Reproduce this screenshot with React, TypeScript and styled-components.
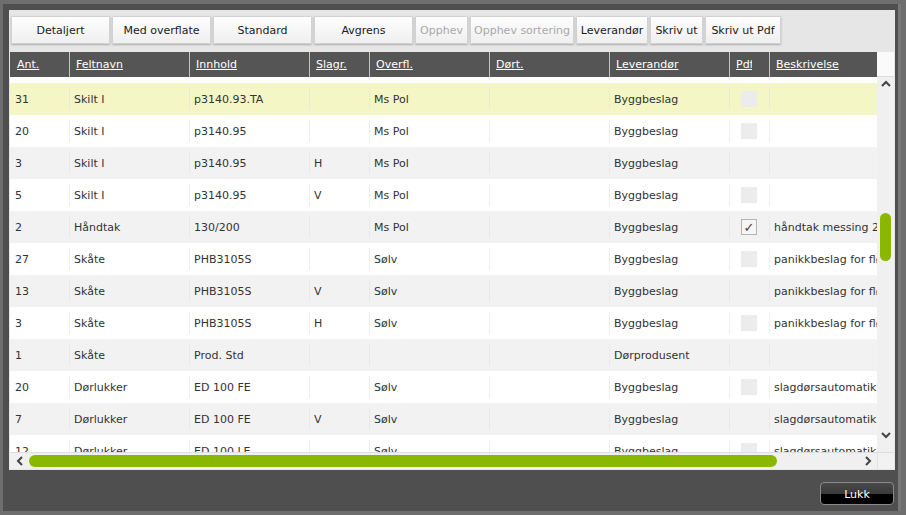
import { createGlobalStyle, styled } from "styled-components";

const GlobalStyle = createGlobalStyle`
  html, body {
    margin: 0;
    padding: 0;
    background: #6e6e6e;
    overflow: hidden;
  }
  body {
    font-family: "DejaVu Sans", Verdana, sans-serif;
    font-size: 11px;
    color: #333;
  }
`;

const Dialog = styled.div`
  margin: 4px 0 0 3px;
  width: 886px;
  height: 501px;
  padding: 6px 3px 0 6px;
  background: #4f4f4f;
  box-shadow: 3px 0 0 #787878, 0 3px 0 #787878;
  display: flex;
  flex-direction: column;
`;

const Panel = styled.div`
  width: 886px;
  height: 460px;
  background: #e6e6e6;
  display: flex;
  flex-direction: column;
`;

const Toolbar = styled.div`
  display: flex;
  gap: 2px;
  padding: 6px 0 0 2px;
  height: 28px;
  margin-bottom: 8px;
`;

const ToolButton = styled.button<{ $w: number }>`
  width: ${(p) => p.$w}px;
  height: 28px;
  padding: 0;
  font-family: inherit;
  font-size: 11px;
  color: ${(p) => (p.disabled ? "#a8a8a8" : "#1a1a1a")};
  background: linear-gradient(#fefefe, #efefef);
  border: 1px solid #d2d2d2;
  border-radius: 1px;
  box-shadow: 0 1px 2px rgba(0, 0, 0, 0.25);
  white-space: nowrap;
`;

const Table = styled.div`
  margin-left: 1px;
  width: 884px;
  height: 417px;
  background: #fff;
  display: grid;
  grid-template-columns: 867px 17px;
  grid-template-rows: 25px 375px 17px;
`;

const Header = styled.div`
  display: flex;
  background: #555;
  overflow: hidden;
`;

const HeadCell = styled.div<{ $w: number; $first?: boolean }>`
  flex: 0 0 ${(p) => p.$w}px;
  box-sizing: border-box;
  border-left: 1px solid ${(p) => (p.$first ? "transparent" : "#c4c4c4")};
  padding-left: 6px;
  display: flex;
  align-items: center;
  color: #fff;
  text-decoration: underline;
  overflow: hidden;
  white-space: nowrap;
`;

const Clip = styled.span<{ $max: number }>`
  display: inline-block;
  max-width: ${(p) => p.$max}px;
  overflow: hidden;
`;

const HeadCorner = styled.div`
  background: #fafafa;
  border-bottom: 1px solid #dcdcdc;
`;

const Body = styled.div`
  overflow: hidden;
  padding-top: 6px;
`;

const Row = styled.div<{ $tone: "sel" | "white" | "grey" }>`
  display: flex;
  height: 32px;
  background: ${(p) =>
    p.$tone === "sel" ? "#f4f6c6" : p.$tone === "grey" ? "#f2f2f2" : "#fff"};
`;

const Cell = styled.div<{ $w: number; $first?: boolean; $center?: boolean }>`
  flex: 0 0 ${(p) => p.$w}px;
  box-sizing: border-box;
  position: relative;
  padding-left: ${(p) => (p.$center ? 0 : 5)}px;
  display: flex;
  align-items: center;
  justify-content: ${(p) => (p.$center ? "center" : "flex-start")};
  white-space: nowrap;
  overflow: hidden;

  &::before {
    content: "";
    display: ${(p) => (p.$first ? "none" : "block")};
    position: absolute;
    left: 0;
    top: 5px;
    bottom: 5px;
    width: 1px;
    background: rgba(225, 225, 225, 0.55);
  }
`;

const Check = styled.div<{ $on?: boolean }>`
  width: 16px;
  height: 16px;
  box-sizing: border-box;
  background: ${(p) => (p.$on ? "#f6f6f6" : "#ececec")};
  border: 1px solid ${(p) => (p.$on ? "#b4b4b4" : "#ececec")};
  display: flex;
  align-items: center;
  justify-content: center;
  font-size: 13px;
  font-weight: bold;
  color: #444;
`;

const VScroll = styled.div`
  background: #f0f0f0;
  display: flex;
  flex-direction: column;
  align-items: center;
  padding-top: 3px;
`;

const VThumb = styled.div`
  width: 11px;
  height: 48px;
  border-radius: 6px;
  background: #8ab800;
  margin: 125px 0 170px;
`;

const HScroll = styled.div`
  background: #f0f0f0;
  border-top: 1px solid #dedede;
  display: flex;
  align-items: center;
  padding-left: 6px;
  gap: 5px;
`;

const HThumb = styled.div`
  width: 748px;
  height: 12px;
  border-radius: 6px;
  background: #8ab800;
  margin-right: 82px;
`;

const ScrollCorner = styled.div`
  background: #f2f2f2;
  border-top: 1px solid #dedede;
  border-left: 1px solid #e2e2e2;
`;

const Footer = styled.div`
  display: flex;
  justify-content: flex-end;
  padding: 12px 1px 0 0;
`;

const CloseButton = styled.button`
  width: 74px;
  height: 23px;
  padding: 2px 0 0;
  box-sizing: border-box;
  font-family: inherit;
  font-size: 11px;
  color: #fff;
  border: 1px solid #8a8a8a;
  border-radius: 4px;
  background: linear-gradient(#4a4a4a 0%, #3a3a3a 50%, #000 50%, #000 100%);
`;

const Chevron = ({ dir }: { dir: "up" | "down" | "left" | "right" }) => {
  const pts = {
    up: "1,6 5,2 9,6",
    down: "1,2 5,6 9,2",
    left: "6,1 2,5 6,9",
    right: "2,1 6,5 2,9",
  }[dir];
  const vertical = dir === "up" || dir === "down";
  return (
    <svg
      width={vertical ? 10 : 8}
      height={vertical ? 8 : 10}
      viewBox={vertical ? "0 0 10 8" : "0 0 8 10"}
    >
      <polyline points={pts} fill="none" stroke="#444" strokeWidth="2" />
    </svg>
  );
};

const widths = [59, 120, 120, 60, 120, 120, 120, 40, 200];
const headers = [
  "Ant.",
  "Feltnavn",
  "Innhold",
  "Slagr.",
  "Overfl.",
  "Dørt.",
  "Leverandør",
  "Pdf",
  "Beskrivelse",
];

type Item = [string, string, string, string, string, string, "box" | "on" | "", string];

const rows: Item[] = [
  ["31", "Skilt I", "p3140.93.TA", "", "Ms Pol", "Byggbeslag", "box", ""],
  ["20", "Skilt I", "p3140.95", "", "Ms Pol", "Byggbeslag", "box", ""],
  ["3", "Skilt I", "p3140.95", "H", "Ms Pol", "Byggbeslag", "", ""],
  ["5", "Skilt I", "p3140.95", "V", "Ms Pol", "Byggbeslag", "box", ""],
  ["2", "Håndtak", "130/200", "", "Ms Pol", "Byggbeslag", "on", "håndtak messing 200"],
  ["27", "Skåte", "PHB3105S", "", "Sølv", "Byggbeslag", "box", "panikkbeslag for fløydør"],
  ["13", "Skåte", "PHB3105S", "V", "Sølv", "Byggbeslag", "", "panikkbeslag for fløydør"],
  ["3", "Skåte", "PHB3105S", "H", "Sølv", "Byggbeslag", "box", "panikkbeslag for fløydør"],
  ["1", "Skåte", "Prod. Std", "", "", "Dørprodusent", "", ""],
  ["20", "Dørlukker", "ED 100 FE", "", "Sølv", "Byggbeslag", "box", "slagdørsautomatikk"],
  ["7", "Dørlukker", "ED 100 FE", "V", "Sølv", "Byggbeslag", "", "slagdørsautomatikk"],
  ["12", "Dørlukker", "ED 100 LE", "", "Sølv", "Byggbeslag", "box", "slagdørsautomatikk"],
];

const buttons: [string, number, boolean][] = [
  ["Detaljert", 99, false],
  ["Med overflate", 99, false],
  ["Standard", 99, false],
  ["Avgrens", 99, false],
  ["Opphev", 53, true],
  ["Opphev sortering", 104, true],
  ["Leverandør", 72, false],
  ["Skriv ut", 53, false],
  ["Skriv ut Pdf", 76, false],
];

export default function App() {
  return (
    <>
      <GlobalStyle />
      <Dialog>
        <Panel>
          <Toolbar>
            {buttons.map(([label, w, disabled]) => (
              <ToolButton key={label} $w={w} disabled={disabled}>
                {label}
              </ToolButton>
            ))}
          </Toolbar>
          <Table>
            <Header>
              {headers.map((h, i) => (
                <HeadCell key={h} $w={widths[i]} $first={i === 0}>
                  {h === "Pdf" ? <Clip $max={16}>{h}</Clip> : h}
                </HeadCell>
              ))}
            </Header>
            <HeadCorner />
            <Body>
              {rows.map((r, idx) => {
                const [ant, felt, inn, slag, overfl, lev, pdf, besk] = r;
                const tone = idx === 0 ? "sel" : idx % 2 === 1 ? "white" : "grey";
                return (
                  <Row key={idx} $tone={tone}>
                    <Cell $w={widths[0]} $first>{ant}</Cell>
                    <Cell $w={widths[1]}>{felt}</Cell>
                    <Cell $w={widths[2]}>{inn}</Cell>
                    <Cell $w={widths[3]}>{slag}</Cell>
                    <Cell $w={widths[4]}>{overfl}</Cell>
                    <Cell $w={widths[5]}></Cell>
                    <Cell $w={widths[6]}>{lev}</Cell>
                    <Cell $w={widths[7]} $center>
                      {pdf === "box" && <Check />}
                      {pdf === "on" && <Check $on>✓</Check>}
                    </Cell>
                    <Cell $w={widths[8]}>{besk}</Cell>
                  </Row>
                );
              })}
            </Body>
            <VScroll>
              <Chevron dir="up" />
              <VThumb />
              <Chevron dir="down" />
            </VScroll>
            <HScroll>
              <Chevron dir="left" />
              <HThumb />
              <Chevron dir="right" />
            </HScroll>
            <ScrollCorner />
          </Table>
        </Panel>
        <Footer>
          <CloseButton>Lukk</CloseButton>
        </Footer>
      </Dialog>
    </>
  );
}
